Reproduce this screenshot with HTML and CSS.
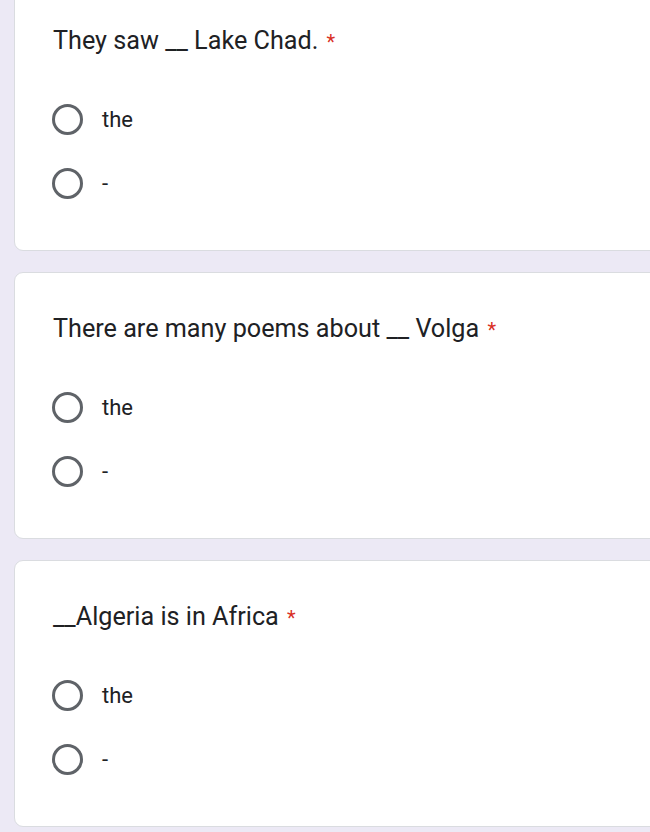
FILE: index.html
```html
<!DOCTYPE html>
<html>
<head>
<meta charset="utf-8">
<link rel="stylesheet" href="styles.css">
</head>
<body>
<div class="page">
  <div class="card first">
    <div class="title">They saw __ Lake Chad. <span class="req">*</span></div>
    <div class="options">
      <div class="opt"><span class="radio"></span><span class="label">the</span></div>
      <div class="opt"><span class="radio"></span><span class="label">-</span></div>
    </div>
  </div>
  <div class="card">
    <div class="title">There are many poems about __ Volga <span class="req">*</span></div>
    <div class="options">
      <div class="opt"><span class="radio"></span><span class="label">the</span></div>
      <div class="opt"><span class="radio"></span><span class="label">-</span></div>
    </div>
  </div>
  <div class="card">
    <div class="title">__Algeria is in Africa <span class="req">*</span></div>
    <div class="options">
      <div class="opt"><span class="radio"></span><span class="label">the</span></div>
      <div class="opt"><span class="radio"></span><span class="label">-</span></div>
    </div>
  </div>
</div>
</body>
</html>
```
FILE: styles.css
```css
html, body {
  margin: 0;
  padding: 0;
  background: #ece9f5;
  overflow: hidden;
  width: 650px;
  height: 832px;
}
.page {
  display: flex;
  flex-direction: column;
  gap: 21px;
  padding-left: 14px;
}
.card {
  background: #fff;
  border: 1px solid #dadce0;
  border-radius: 9px;
  width: 680px;
  height: 265px;
  box-sizing: content-box;
  padding-left: 38px;
  font-family: Roboto, "Noto Sans", sans-serif;
  color: #202124;
  display: flex;
  flex-direction: column;
}
.card.first {
  margin-top: -16px;
}
.title {
  margin-top: 40px;
  height: 32px;
  line-height: 32px;
  font-size: 25.2px;
}
.u {
  letter-spacing: 0;
}
.req {
  color: #d93025;
  font-size: 20px;
  margin-left: 2px;
}
.options {
  margin-top: 30px;
  display: flex;
  flex-direction: column;
}
.opt {
  height: 64px;
  display: flex;
  align-items: center;
}
.radio {
  width: 25px;
  height: 25px;
  border: 3px solid #5f6368;
  border-radius: 50%;
  flex: none;
  margin-left: -1px;
}
.label {
  margin-left: 19px;
  font-size: 22px;
}
```
